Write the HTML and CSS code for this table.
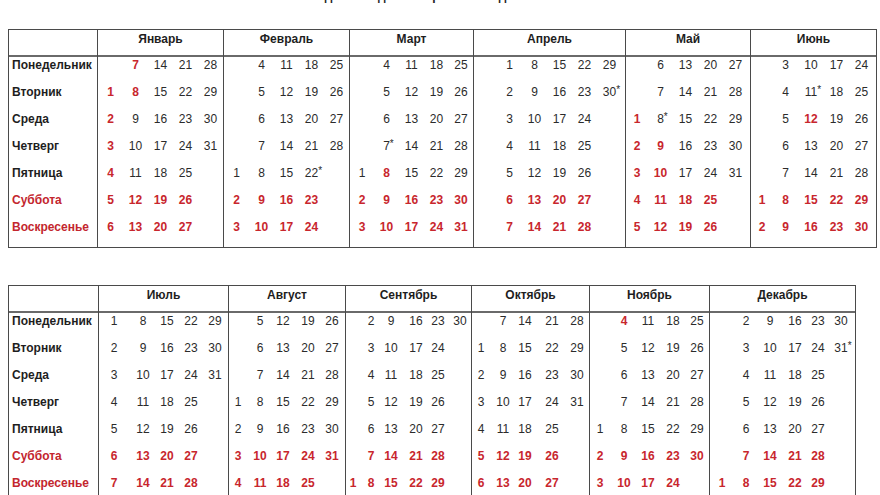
FILE: index.html
```html
<!DOCTYPE html>
<html lang="ru">
<head>
<meta charset="utf-8">
<title>Производственный календарь</title>
<link rel="stylesheet" href="styles.css">
</head>
<body>
<div class="page">
  <div class="title">для пятидневной рабочей недели</div>

  <div class="cal cal-top">
    <div class="col labels">
      <div class="head"></div>
      <div class="row">Понедельник</div>
      <div class="row">Вторник</div>
      <div class="row">Среда</div>
      <div class="row">Четверг</div>
      <div class="row">Пятница</div>
      <div class="row red">Суббота</div>
      <div class="row red">Воскресенье</div>
    </div>

    <div class="col m-jan">
      <div class="head">Январь</div>
      <div class="row"><span></span><b>7</b><span>14</span><span>21</span><span>28</span></div>
      <div class="row"><b>1</b><b>8</b><span>15</span><span>22</span><span>29</span></div>
      <div class="row"><b>2</b><span>9</span><span>16</span><span>23</span><span>30</span></div>
      <div class="row"><b>3</b><span>10</span><span>17</span><span>24</span><span>31</span></div>
      <div class="row"><b>4</b><span>11</span><span>18</span><span>25</span></div>
      <div class="row"><b>5</b><b>12</b><b>19</b><b>26</b></div>
      <div class="row"><b>6</b><b>13</b><b>20</b><b>27</b></div>
    </div>

    <div class="col m-feb">
      <div class="head">Февраль</div>
      <div class="row"><span></span><span>4</span><span>11</span><span>18</span><span>25</span></div>
      <div class="row"><span></span><span>5</span><span>12</span><span>19</span><span>26</span></div>
      <div class="row"><span></span><span>6</span><span>13</span><span>20</span><span>27</span></div>
      <div class="row"><span></span><span>7</span><span>14</span><span>21</span><span>28</span></div>
      <div class="row"><span>1</span><span>8</span><span>15</span><span><u class="st">22</u></span></div>
      <div class="row"><b>2</b><b>9</b><b>16</b><b>23</b></div>
      <div class="row"><b>3</b><b>10</b><b>17</b><b>24</b></div>
    </div>

    <div class="col m-mar">
      <div class="head">Март</div>
      <div class="row"><span></span><span>4</span><span>11</span><span>18</span><span>25</span></div>
      <div class="row"><span></span><span>5</span><span>12</span><span>19</span><span>26</span></div>
      <div class="row"><span></span><span>6</span><span>13</span><span>20</span><span>27</span></div>
      <div class="row"><span></span><span><u class="st">7</u></span><span>14</span><span>21</span><span>28</span></div>
      <div class="row"><span>1</span><b>8</b><span>15</span><span>22</span><span>29</span></div>
      <div class="row"><b>2</b><b>9</b><b>16</b><b>23</b><b>30</b></div>
      <div class="row"><b>3</b><b>10</b><b>17</b><b>24</b><b>31</b></div>
    </div>

    <div class="col m-apr">
      <div class="head">Апрель</div>
      <div class="row"><span>1</span><span>8</span><span>15</span><span>22</span><span>29</span></div>
      <div class="row"><span>2</span><span>9</span><span>16</span><span>23</span><span><u class="st">30</u></span></div>
      <div class="row"><span>3</span><span>10</span><span>17</span><span>24</span></div>
      <div class="row"><span>4</span><span>11</span><span>18</span><span>25</span></div>
      <div class="row"><span>5</span><span>12</span><span>19</span><span>26</span></div>
      <div class="row"><b>6</b><b>13</b><b>20</b><b>27</b></div>
      <div class="row"><b>7</b><b>14</b><b>21</b><b>28</b></div>
    </div>

    <div class="col m-may">
      <div class="head">Май</div>
      <div class="row"><span></span><span>6</span><span>13</span><span>20</span><span>27</span></div>
      <div class="row"><span></span><span>7</span><span>14</span><span>21</span><span>28</span></div>
      <div class="row"><b>1</b><span><u class="st">8</u></span><span>15</span><span>22</span><span>29</span></div>
      <div class="row"><b>2</b><b>9</b><span>16</span><span>23</span><span>30</span></div>
      <div class="row"><b>3</b><b>10</b><span>17</span><span>24</span><span>31</span></div>
      <div class="row"><b>4</b><b>11</b><b>18</b><b>25</b></div>
      <div class="row"><b>5</b><b>12</b><b>19</b><b>26</b></div>
    </div>

    <div class="col m-jun last">
      <div class="head">Июнь</div>
      <div class="row"><span></span><span>3</span><span>10</span><span>17</span><span>24</span></div>
      <div class="row"><span></span><span>4</span><span><u class="st">11</u></span><span>18</span><span>25</span></div>
      <div class="row"><span></span><span>5</span><b>12</b><span>19</span><span>26</span></div>
      <div class="row"><span></span><span>6</span><span>13</span><span>20</span><span>27</span></div>
      <div class="row"><span></span><span>7</span><span>14</span><span>21</span><span>28</span></div>
      <div class="row"><b>1</b><b>8</b><b>15</b><b>22</b><b>29</b></div>
      <div class="row"><b>2</b><b>9</b><b>16</b><b>23</b><b>30</b></div>
    </div>
  </div>

  <div class="cal cal-bottom">
    <div class="col labels">
      <div class="head"></div>
      <div class="row">Понедельник</div>
      <div class="row">Вторник</div>
      <div class="row">Среда</div>
      <div class="row">Четверг</div>
      <div class="row">Пятница</div>
      <div class="row red">Суббота</div>
      <div class="row red">Воскресенье</div>
    </div>

    <div class="col m-jul">
      <div class="head">Июль</div>
      <div class="row"><span>1</span><span>8</span><span>15</span><span>22</span><span>29</span></div>
      <div class="row"><span>2</span><span>9</span><span>16</span><span>23</span><span>30</span></div>
      <div class="row"><span>3</span><span>10</span><span>17</span><span>24</span><span>31</span></div>
      <div class="row"><span>4</span><span>11</span><span>18</span><span>25</span></div>
      <div class="row"><span>5</span><span>12</span><span>19</span><span>26</span></div>
      <div class="row"><b>6</b><b>13</b><b>20</b><b>27</b></div>
      <div class="row"><b>7</b><b>14</b><b>21</b><b>28</b></div>
    </div>

    <div class="col m-aug">
      <div class="head">Август</div>
      <div class="row"><span></span><span>5</span><span>12</span><span>19</span><span>26</span></div>
      <div class="row"><span></span><span>6</span><span>13</span><span>20</span><span>27</span></div>
      <div class="row"><span></span><span>7</span><span>14</span><span>21</span><span>28</span></div>
      <div class="row"><span>1</span><span>8</span><span>15</span><span>22</span><span>29</span></div>
      <div class="row"><span>2</span><span>9</span><span>16</span><span>23</span><span>30</span></div>
      <div class="row"><b>3</b><b>10</b><b>17</b><b>24</b><b>31</b></div>
      <div class="row"><b>4</b><b>11</b><b>18</b><b>25</b></div>
    </div>

    <div class="col m-sep">
      <div class="head">Сентябрь</div>
      <div class="row"><span></span><span>2</span><span>9</span><span>16</span><span>23</span><span>30</span></div>
      <div class="row"><span></span><span>3</span><span>10</span><span>17</span><span>24</span></div>
      <div class="row"><span></span><span>4</span><span>11</span><span>18</span><span>25</span></div>
      <div class="row"><span></span><span>5</span><span>12</span><span>19</span><span>26</span></div>
      <div class="row"><span></span><span>6</span><span>13</span><span>20</span><span>27</span></div>
      <div class="row"><span></span><b>7</b><b>14</b><b>21</b><b>28</b></div>
      <div class="row"><b>1</b><b>8</b><b>15</b><b>22</b><b>29</b></div>
    </div>

    <div class="col m-oct">
      <div class="head">Октябрь</div>
      <div class="row"><span></span><span>7</span><span>14</span><span>21</span><span>28</span></div>
      <div class="row"><span>1</span><span>8</span><span>15</span><span>22</span><span>29</span></div>
      <div class="row"><span>2</span><span>9</span><span>16</span><span>23</span><span>30</span></div>
      <div class="row"><span>3</span><span>10</span><span>17</span><span>24</span><span>31</span></div>
      <div class="row"><span>4</span><span>11</span><span>18</span><span>25</span></div>
      <div class="row"><b>5</b><b>12</b><b>19</b><b>26</b></div>
      <div class="row"><b>6</b><b>13</b><b>20</b><b>27</b></div>
    </div>

    <div class="col m-nov">
      <div class="head">Ноябрь</div>
      <div class="row"><span></span><b>4</b><span>11</span><span>18</span><span>25</span></div>
      <div class="row"><span></span><span>5</span><span>12</span><span>19</span><span>26</span></div>
      <div class="row"><span></span><span>6</span><span>13</span><span>20</span><span>27</span></div>
      <div class="row"><span></span><span>7</span><span>14</span><span>21</span><span>28</span></div>
      <div class="row"><span>1</span><span>8</span><span>15</span><span>22</span><span>29</span></div>
      <div class="row"><b>2</b><b>9</b><b>16</b><b>23</b><b>30</b></div>
      <div class="row"><b>3</b><b>10</b><b>17</b><b>24</b></div>
    </div>

    <div class="col m-dec last">
      <div class="head">Декабрь</div>
      <div class="row"><span></span><span>2</span><span>9</span><span>16</span><span>23</span><span>30</span></div>
      <div class="row"><span></span><span>3</span><span>10</span><span>17</span><span>24</span><span><u class="st">31</u></span></div>
      <div class="row"><span></span><span>4</span><span>11</span><span>18</span><span>25</span></div>
      <div class="row"><span></span><span>5</span><span>12</span><span>19</span><span>26</span></div>
      <div class="row"><span></span><span>6</span><span>13</span><span>20</span><span>27</span></div>
      <div class="row"><span></span><b>7</b><b>14</b><b>21</b><b>28</b></div>
      <div class="row"><b>1</b><b>8</b><b>15</b><b>22</b><b>29</b></div>
    </div>
  </div>
</div>
</body>
</html>
```

FILE: styles.css
```css
html, body {
  margin: 0;
  padding: 0;
  background: #ffffff;
}

body {
  font-family: "Liberation Sans", Arial, sans-serif;
  font-size: 12px;
  color: #2b2b2b;
  overflow: hidden;
}

.page {
  width: 880px;
  height: 495px;
  overflow: hidden;
}

.title {
  margin-top: -11px;
  height: 15px;
  line-height: 15px;
  padding-right: 27px;
  text-align: center;
  font-weight: bold;
  font-size: 12px;
  color: #222;
}

.cal {
  display: flex;
  width: max-content;
  margin-left: 8px;
  border: 1px solid #4a4a4a;
}

.cal-top {
  margin-top: 25px;
}

.cal-bottom {
  margin-top: 37px;
}

.col {
  box-sizing: border-box;
  border-right: 1px solid #4a4a4a;
  padding-bottom: 1px;
}

.col.last {
  border-right: none;
}

.head {
  box-sizing: border-box;
  height: 27px;
  padding-top: 1px;
  line-height: 16px;
  border-bottom: 2px solid #6a6a6a;
  text-align: center;
  font-weight: bold;
  color: #1e1e1e;
}

.row {
  height: 27px;
  line-height: 16px;
}

.labels .row {
  padding-left: 3px;
  font-weight: bold;
  color: #1e1e1e;
}

.labels .row.red {
  color: #c3262e;
}

.col:not(.labels) .row {
  display: grid;
}

.row > span,
.row > b {
  display: flex;
  justify-content: center;
}

.row > b {
  color: #c8262d;
  font-weight: bold;
}

.st {
  position: relative;
  text-decoration: none;
}

.st::after {
  content: "*";
  position: absolute;
  left: 100%;
  top: -2px;
  font-size: 10px;
}

/* top table */
.cal-top .labels { width: 89px; }
.m-jan { width: 126px; }
.m-feb { width: 126px; }
.m-mar { width: 124px; }
.m-apr { width: 152px; }
.m-may { width: 125px; }
.m-jun { width: 125px; }

.m-jan .row,
.m-feb .row { grid-template-columns: repeat(5, 25px); }
.m-mar .row { grid-template-columns: 24px 25px 25px 25px 24px; }
.m-apr .row { grid-template-columns: repeat(5, 25px); padding-left: 23px; }
.m-may .row { grid-template-columns: 22px 25px 25px 25px 25px; }
.m-jun .row { grid-template-columns: 22px 25px 26px 25px 25px; }

/* bottom table */
.cal-bottom .labels { width: 90px; }
.m-jul { width: 130px; }
.m-aug { width: 117px; }
.m-sep { width: 126px; }
.m-oct { width: 118px; }
.m-nov { width: 120px; }
.m-dec { width: 145px; }

.m-jul .row { grid-template-columns: 30px 28px 20px 28px 20px; }
.m-aug .row { grid-template-columns: 18px 26px 20px 30px 18px; }
.m-sep .row { grid-template-columns: 14px 22px 18px 32px 12px 32px; }
.m-oct .row { grid-template-columns: 18px 26px 18px 36px 14px; }
.m-nov .row { grid-template-columns: 20px 28px 20px 30px 18px; }
.m-dec .row { grid-template-columns: 24px 24px 24px 26px 20px 26px; }
```
